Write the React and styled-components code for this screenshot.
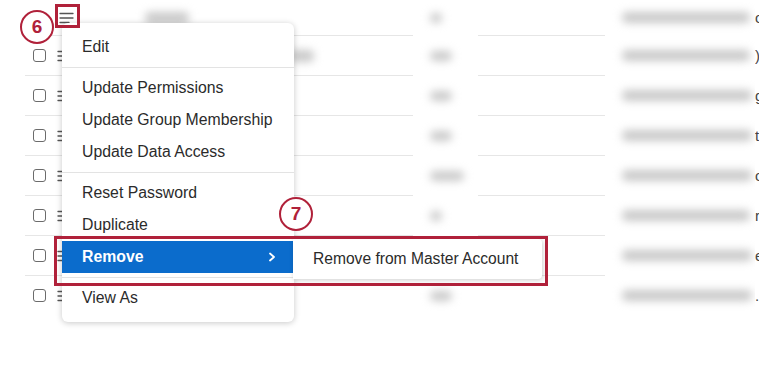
import React from 'react'
import styled, { createGlobalStyle } from 'styled-components'

const Global = createGlobalStyle`
  html, body {
    margin: 0;
    padding: 0;
    background: #fff;
    overflow: hidden;
  }
  body {
    font-family: 'Liberation Sans', Arial, sans-serif;
    color: #2b2b2b;
  }
`

const Page = styled.div`
  position: relative;
  width: 759px;
  height: 375px;
  overflow: hidden;
`

const Table = styled.div`
  padding-left: 25px;
`

const Row = styled.div`
  display: grid;
  grid-template-columns: 27px 28px 333px 65px 127px 150px 1fr;
  height: ${p => (p.$first ? '36px' : '40px')};
`

const Cell = styled.div`
  display: flex;
  align-items: center;
  border-bottom: 1px solid ${p => (p.$noLine || p.$last ? 'transparent' : '#e6e6e6')};
  overflow: hidden;
  white-space: nowrap;
`

const Checkbox = styled.span`
  width: 13px;
  height: 13px;
  border: 1.3px solid #6b6b6b;
  border-radius: 3px;
  margin-left: 8px;
  box-sizing: border-box;
`

const Blob = styled.span`
  display: inline-block;
  height: ${p => p.$h || 10}px;
  width: ${p => p.$w}px;
  margin-left: ${p => p.$x || 0}px;
  background: #c9c9c9;
  border-radius: 5px;
  filter: blur(4px);
`

const Peek = styled.span`
  font-size: 15px;
  color: #444;
`

const Handle = styled.svg`
  margin-left: ${p => p.$x}px;
  flex: none;
`

const Menu = styled.div`
  position: absolute;
  left: 62px;
  top: 23px;
  width: 232px;
  padding: 8px 0;
  background: #fff;
  border-radius: 6px;
  box-shadow: 0 1px 6px rgba(0, 0, 0, 0.22);
  z-index: 2;
`

const Item = styled.div`
  position: relative;
  display: flex;
  align-items: center;
  justify-content: space-between;
  height: 32px;
  padding: 0 18px 0 20px;
  font-size: 15.8px;
  color: ${p => (p.$active ? '#fff' : '#2b2b2b')};
  background: ${p => (p.$active ? '#0b6ccc' : 'transparent')};
  font-weight: ${p => (p.$active ? 600 : 400)};
  white-space: nowrap;
`

const Divider = styled.div`
  height: 1px;
  margin: 4px 0;
  background: #e3e3e3;
`

const SubMenu = styled.div`
  position: absolute;
  left: calc(100% - 1px);
  top: -2px;
  width: 249px;
  padding: 4px 0;
  background: #fff;
  border-radius: 0 4px 4px 0;
  box-shadow: 1px 1px 5px rgba(0, 0, 0, 0.2);
`

const SubItem = styled.div`
  height: 32px;
  display: flex;
  align-items: center;
  padding-left: 20px;
  font-size: 15.6px;
  font-weight: 400;
  color: #2b2b2b;
`

const Step = styled.div`
  position: absolute;
  left: ${p => p.$x}px;
  top: ${p => p.$y}px;
  width: 34px;
  height: 34px;
  box-sizing: border-box;
  border: 2.5px solid #b0213a;
  border-radius: 50%;
  background: #fff;
  color: #b0213a;
  font-size: 19px;
  font-weight: 600;
  display: flex;
  align-items: center;
  justify-content: center;
  z-index: 4;
`

const Frame = styled.div`
  position: absolute;
  left: ${p => p.$x}px;
  top: ${p => p.$y}px;
  width: ${p => p.$w}px;
  height: ${p => p.$h}px;
  box-sizing: border-box;
  border: 3px solid #b0213a;
  z-index: 3;
  pointer-events: none;
`

const HandleIcon = ({ x, full }) => (
  <Handle $x={x} width="16" height="14" viewBox="0 0 16 14">
    <g stroke="#555" strokeWidth="1.3" strokeLinecap="round">
      <line x1="1" y1="2.5" x2="14" y2="2.5" />
      <line x1="1" y1="7" x2="14" y2="7" />
      <line x1="1" y1="11.5" x2={full ? 14 : 10} y2="11.5" />
    </g>
  </Handle>
)

const rows = [
  { name: [65, 44], count: 12, email: 128, peek: 'c' },
  { name: [210, 24], count: 22, email: 128, peek: ')' },
  { count: 22, email: 130, peek: 'g' },
  { count: 22, email: 130, peek: 't' },
  { count: 34, email: 130, peek: 'c' },
  { count: 12, email: 128, peek: 'r' },
  { count: 22, email: 130, peek: 'e' },
  { count: 22, email: 130, peek: '.' },
]

const Chevron = () => (
  <svg width="8" height="10" viewBox="0 0 8 10">
    <polyline points="2,1.5 6,5 2,8.5" fill="none" stroke="#fff" strokeWidth="1.8" strokeLinecap="round" strokeLinejoin="round" />
  </svg>
)

const App = () => {
  return (
    <Page>
      <Global />
      <Table>
        {rows.map((r, i) => {
          const last = i === rows.length - 1
          return (
            <Row key={i} $first={i === 0}>
              <Cell $last={last}>{i > 0 && <Checkbox />}</Cell>
              <Cell $last={last}>
                <HandleIcon x={i === 0 ? 7 : 5} full={i > 0} />
              </Cell>
              <Cell $last={last}>{r.name && <Blob $x={r.name[0]} $w={r.name[1]} $h={12} />}</Cell>
              <Cell $noLine>
                <Blob $x={17} $w={r.count} />
              </Cell>
              <Cell $last={last} />
              <Cell $noLine>
                <Blob $x={17} $w={r.email} $h={11} />
              </Cell>
              <Cell $noLine>
                <Peek>{r.peek}</Peek>
              </Cell>
            </Row>
          )
        })}
      </Table>

      <Menu>
        <Item>Edit</Item>
        <Divider />
        <Item>Update Permissions</Item>
        <Item>Update Group Membership</Item>
        <Item>Update Data Access</Item>
        <Divider />
        <Item>Reset Password</Item>
        <Item>Duplicate</Item>
        <Item $active>
          Remove
          <Chevron />
          <SubMenu>
            <SubItem>Remove from Master Account</SubItem>
          </SubMenu>
        </Item>
        <Divider />
        <Item>View As</Item>
      </Menu>

      <Frame $x={55} $y={4} $w={25} $h={24} />
      <Frame $x={54} $y={236} $w={494} $h={50} />
      <Step $x={20} $y={10}>6</Step>
      <Step $x={279} $y={197}>7</Step>
    </Page>
  )
}

export default App
